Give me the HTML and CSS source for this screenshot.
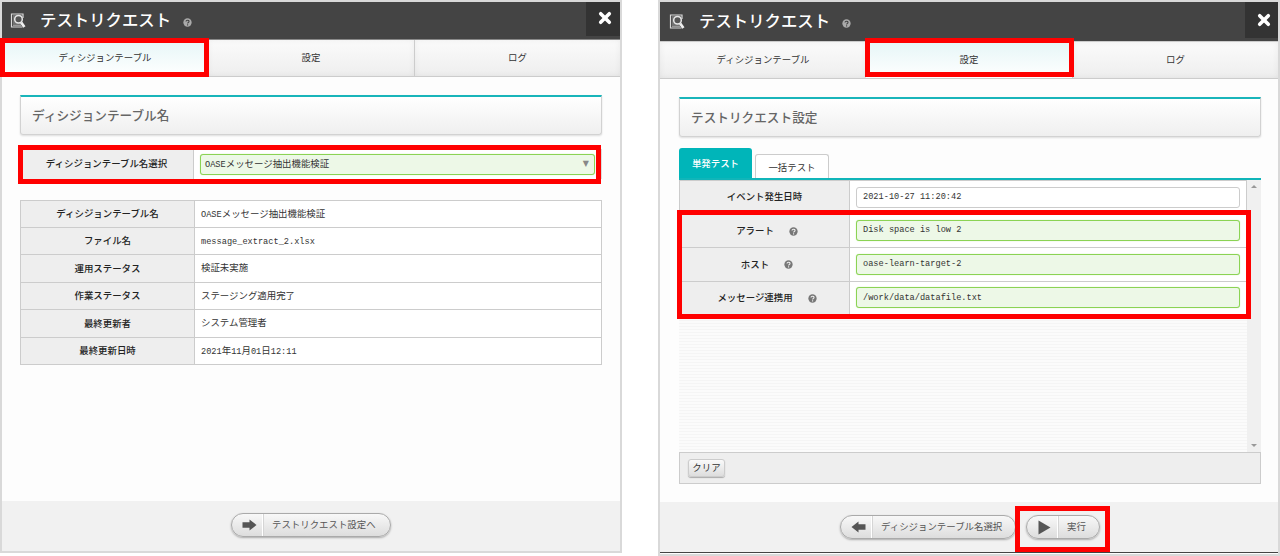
FILE: index.html
```html
<!DOCTYPE html>
<html lang="ja">
<head>
<meta charset="utf-8">
<title>テストリクエスト</title>
<link rel="stylesheet" href="styles.css">
</head>
<body>
<svg class="defs" width="0" height="0">
  <symbol id="doc" viewBox="0 0 16 16">
    <path d="M13 5V1H1.500v13h11" fill="none" stroke="#d8d8d8" stroke-width="1.200"/>
    <path d="M3 3h9M3 5h3M3 7h3M3 9h3M3 11h8M3 12.600h8" stroke="#aaa" stroke-width=".9"/>
    <circle cx="8.500" cy="6.300" r="3.800" fill="#555" stroke="#e6e6e6" stroke-width="1.500"/>
    <path d="M11.200 9.500l3.200 4.500" stroke="#eee" stroke-width="2.700"/>
  </symbol>
  <symbol id="help" viewBox="0 0 10 10">
    <circle cx="5" cy="5" r="4.600" fill="currentColor"/>
    <path d="M3.300 3.900c.1-2 3.500-1.900 3.400 0C6.700 5 5.100 5 5.100 6.100M5.100 7v1.200" fill="none" stroke="var(--mark)" stroke-width="1.200"/>
  </symbol>
  <symbol id="close" viewBox="0 0 14 14">
    <path d="M2.700 2.700l8.600 8.600M11.300 2.700l-8.600 8.600" stroke="#fff" stroke-width="3.600" stroke-linecap="round"/>
  </symbol>
  <symbol id="arrow" viewBox="0 0 15 12">
    <path d="M.5 3.200h7V.5L14.500 6l-7 5.500V8.800h-7z" fill="#555"/>
  </symbol>
  <symbol id="play" viewBox="0 0 13 15"><path d="M.5.500L12.500 7.500.5 14.500z" fill="#555"/></symbol>
</svg>
<main class="stage">
  <section class="dialog dialog-table">
    <header class="head">
      <svg class="doc"><use href="#doc"/></svg>
      <h1>テストリクエスト</h1>
      <svg class="help"><use href="#help"/></svg>
      <button class="close"><svg><use href="#close"/></svg></button>
    </header>
    <nav class="tabs">
      <a class="active">ディシジョンテーブル</a><a>設定</a><a>ログ</a>
    </nav>
    <div class="body">
      <h2>ディシジョンテーブル名</h2>
      <div class="choose">
        <div class="label">ディシジョンテーブル名選択</div>
        <div class="cell"><div class="field ok select"><span><span class="mono">OASE</span>メッセージ抽出機能検証</span><span class="caret">▼</span></div></div>
      </div>
      <div class="info">
        <div class="row"><b>ディシジョンテーブル名</b><p><span class="mono">OASE</span>メッセージ抽出機能検証</p></div>
        <div class="row"><b>ファイル名</b><p><span class="mono">message_extract_2.xlsx</span></p></div>
        <div class="row"><b>運用ステータス</b><p>検証未実施</p></div>
        <div class="row"><b>作業ステータス</b><p>ステージング適用完了</p></div>
        <div class="row"><b>最終更新者</b><p>システム管理者</p></div>
        <div class="row"><b>最終更新日時</b><p><span class="mono">2021</span>年<span class="mono">11</span>月<span class="mono">01</span>日<span class="mono">12:11</span></p></div>
      </div>
    </div>
    <footer class="foot">
      <button class="pill next"><i><svg class="arrow"><use href="#arrow"/></svg></i><span>テストリクエスト設定へ</span></button>
    </footer>
    <div class="mark mark-tab-table"></div>
    <div class="mark mark-choose"></div>
  </section>

  <section class="dialog dialog-settings">
    <header class="head">
      <svg class="doc"><use href="#doc"/></svg>
      <h1>テストリクエスト</h1>
      <svg class="help"><use href="#help"/></svg>
      <button class="close"><svg><use href="#close"/></svg></button>
    </header>
    <nav class="tabs">
      <a>ディシジョンテーブル</a><a class="active">設定</a><a>ログ</a>
    </nav>
    <div class="body">
      <h2>テストリクエスト設定</h2>
      <div class="subtabs"><a class="on">単発テスト</a><a>一括テスト</a></div>
      <div class="pane">
        <div class="form">
          <div class="frow"><b>イベント発生日時</b><div class="cell"><div class="field mono">2021-10-27 11:20:42</div></div></div>
          <div class="frow"><b class="helped">アラート<svg class="help"><use href="#help"/></svg></b><div class="cell"><div class="field ok mono">Disk space is low 2</div></div></div>
          <div class="frow"><b class="helped">ホスト<svg class="help"><use href="#help"/></svg></b><div class="cell"><div class="field ok mono">oase-learn-target-2</div></div></div>
          <div class="frow"><b class="helped">メッセージ連携用<svg class="help"><use href="#help"/></svg></b><div class="cell"><div class="field ok mono">/work/data/datafile.txt</div></div></div>
        </div>
        <div class="scroll"><i class="up"></i><i class="down"></i></div>
      </div>
      <div class="tools"><button class="clear">クリア</button></div>
    </div>
    <footer class="foot">
      <button class="pill back"><i><svg class="arrow left"><use href="#arrow"/></svg></i><span>ディシジョンテーブル名選択</span></button>
      <button class="pill run"><i><svg class="play"><use href="#play"/></svg></i><span>実行</span></button>
    </footer>
    <div class="mark mark-tab-settings"></div>
    <div class="mark mark-form"></div>
    <div class="mark mark-run"></div>
  </section>
</main>
</body>
</html>
```

FILE: styles.css
```css
* { box-sizing: border-box; }
body {
  margin: 0;
  background: #fff;
  color: #333;
  font: 9.43px/1 "Noto Sans CJK JP", sans-serif;
}
h1, h2, p { margin: 0; }
button { padding: 0; border: 0; font: inherit; color: inherit; }
svg { display: block; flex: none; }
.defs { position: absolute; }
.mono { font-family: "Liberation Mono", monospace; font-size: 8.63px; }

.stage {
  display: flex;
  justify-content: space-between;
  align-items: flex-start;
  width: 1280px;
  height: 556px;
  overflow: hidden;
}
.dialog {
  position: relative;
  display: flex;
  flex-direction: column;
  width: 622px;
  height: 553px;
  border: 2px solid #d9d9d9;
  background: #fdfdfd;
}
.dialog-settings { height: 556px; }

/* Title bar */
.head {
  display: flex;
  align-items: center;
  flex: none;
  height: 38px;
  padding-left: 8px;
  background: #444;
  border-bottom: 1px solid #888;
}
.dialog-settings .head { height: 39px; padding-left: 9px; border-bottom: 0; }
.doc { width: 16px; height: 16px; }
.head h1 {
  margin-left: 14px;
  padding-bottom: 3px;
  font-size: 16.4px;
  line-height: 33px;
  font-weight: 500;
  color: #fff;
  white-space: nowrap;
}
.dialog-settings .head h1 { padding-bottom: 2px; }
.head .help { width: 9px; height: 9px; margin: 3px 0 0 12px; color: #aaa; --mark: #444; }
.close {
  display: flex;
  align-items: center;
  justify-content: center;
  align-self: flex-start;
  width: 34px;
  height: 34px;
  margin-left: auto;
  padding: 0 0 2px 3px;
  background: #333;
}
.dialog-settings .close { width: 33px; height: 36px; padding: 0 0 1px 4px; }
.close svg { width: 14px; height: 14px; }

/* Main tabs */
.tabs {
  display: grid;
  grid-template-columns: repeat(3, 1fr);
  flex: none;
  height: 37px;
  border-bottom: 1px solid #ccc;
}
.dialog-settings .tabs { height: 38px; border-top: 1px solid #ccc; }
.tabs a {
  display: flex;
  align-items: center;
  justify-content: center;
  background: linear-gradient(#fbfbfb, #eee);
  box-shadow: inset 0 0 6px rgba(0, 0, 0, .06);
}
.tabs a:last-child { border-left: 1px solid #ccc; }
.tabs .active { background: linear-gradient(#e6f6f7, #fff); box-shadow: none; }

/* Content */
.body { flex: 1; min-height: 0; padding: 18px 18px 0; }
.dialog-settings .body { padding: 18px 17px 0 19px; }
.body h2 {
  height: 40px;
  padding-left: 11px;
  border: 1px solid #d2d2d2;
  border-top: 2px solid #19b5ba;
  border-radius: 0 0 3px 3px;
  background: linear-gradient(#fff, #efefef);
  box-shadow: 0 1px 2px #ddd;
  color: #666;
  font-size: 12.65px;
  line-height: 35px;
  font-weight: 500;
}
.choose {
  display: grid;
  grid-template-columns: 174px 1fr;
  height: 30px;
  margin-top: 14px;
  border-right: 1px solid #ddd;
}
.label, .row b, .frow b {
  display: flex;
  align-items: center;
  justify-content: center;
  background: #eee;
  border-right: 1px solid #ccc;
  font-weight: 500;
  color: #222;
}
.cell { display: flex; align-items: center; min-height: 0; padding: 0 6px; background: #fff; }
.field {
  display: flex;
  align-items: center;
  flex: 1;
  height: 21px;
  padding-left: 6px;
  border: 1px solid #ccc;
  border-radius: 3px;
  background: #fff;
  white-space: pre;
}
.ok { border-color: #8bd354; background: #edf8e7; box-shadow: 0 0 1px #a9e080; }
.select { justify-content: space-between; padding: 0 5px 0 4px; }
.select > span { line-height: 14px; }
.caret { color: #888; font-size: 8px; font-family: "DejaVu Sans", sans-serif; }
.info {
  display: grid;
  grid-template-rows: 27px 27px 28px 27px 28px 27px;
  margin-top: 21px;
  border: 1px solid #ccc;
  border-bottom: 0;
}
.row {
  display: grid;
  grid-template-columns: 174px 1fr;
  grid-template-rows: minmax(0, 1fr);
  border-bottom: 1px solid #ccc;
  background: #fff;
}
.row p { padding-left: 6px; line-height: 25px; }

/* Settings form */
.subtabs {
  display: flex;
  align-items: flex-end;
  gap: 3px;
  height: 43px;
  border-bottom: 2px solid #10b5b9;
}
.subtabs a {
  width: 74px;
  height: 24px;
  border: 1px solid #ccc;
  border-bottom: 0;
  border-radius: 3px 3px 0 0;
  background: #fff;
  line-height: 24px;
  text-align: center;
}
.subtabs .on {
  width: 73px;
  height: 30px;
  border: 0;
  background: #00b5b9;
  color: #fff;
  line-height: 30px;
  font-weight: 500;
}
.pane { display: flex; height: 272px; }
.form {
  flex: 1;
  background: repeating-linear-gradient(#fbfbfb 0 2px, #f5f5f5 2px 3px);
}
.frow {
  display: grid;
  grid-template-columns: 170px 1fr;
  grid-template-rows: minmax(0, 1fr);
  height: 33.600px;
  border: 1px solid #ccc;
  border-top: 0;
}
.frow:first-child { height: 34.400px; border-top: 1px solid #ccc; }
.frow .helped { padding-left: 5px; }
.frow .help { width: 9px; height: 9px; margin: 1px 0 0 15px; color: #777; --mark: #eee; }
.scroll {
  display: flex;
  flex-direction: column;
  justify-content: space-between;
  align-items: center;
  width: 14px;
  padding: 5px 0;
  background: #f0f0f0;
}
.up, .down { border: 3px solid transparent; }
.up { border-top: 0; border-bottom-color: #999; }
.down { border-bottom: 0; border-top-color: #999; }
.tools {
  height: 32px;
  padding: 6px 8px;
  border: 1px solid #ccc;
  background: #eee;
}
.clear {
  display: block;
  width: 37px;
  height: 18px;
  border: 1px solid #ccc;
  border-radius: 3px;
  background: linear-gradient(#fafafa, #ddd);
  box-shadow: 0 1px 1px #aaa;
}

/* Footer buttons */
.foot {
  display: flex;
  justify-content: center;
  flex: none;
  height: 50px;
  padding-top: 12px;
  background: #f1f1f1;
}
.dialog-settings .foot {
  gap: 10px;
  height: 51px;
  margin-bottom: 1px;
  padding: 13px 0 0 2px;
  border-bottom: 1px solid #444;
}
.pill {
  display: flex;
  width: 160px;
  height: 24px;
  border: 1px solid #aaa;
  border-radius: 12px;
  background: linear-gradient(#f8f8f8, #ddd);
  box-shadow: 0 1px 2px #aaa;
  color: #555;
  line-height: 21px;
}
.pill i {
  display: flex;
  align-items: center;
  justify-content: center;
  flex: none;
  width: 31px;
  padding-left: 4px;
  border-right: 1px solid #fff;
  box-shadow: 1px 0 #d5d5d5;
}
.pill span { padding-left: 9px; white-space: nowrap; }
.back { width: 176px; }
.run { width: 74px; }
.arrow { width: 15px; height: 12px; }
.left { transform: scaleX(-1); }
.play { width: 13px; height: 15px; }

/* Highlight frames laid over the dialogs */
.mark { position: absolute; border: 5px solid #f00; }
.mark-tab-table { left: -2px; top: 36px; width: 209px; height: 39px; }
.mark-choose { left: 16px; top: 143px; width: 583px; height: 39px; }
.mark-tab-settings { left: 205px; top: 36px; width: 209px; height: 39px; }
.mark-form { left: 17px; top: 208px; width: 574px; height: 109px; }
.mark-run { left: 355px; top: 504px; width: 95px; height: 46px; }
```
